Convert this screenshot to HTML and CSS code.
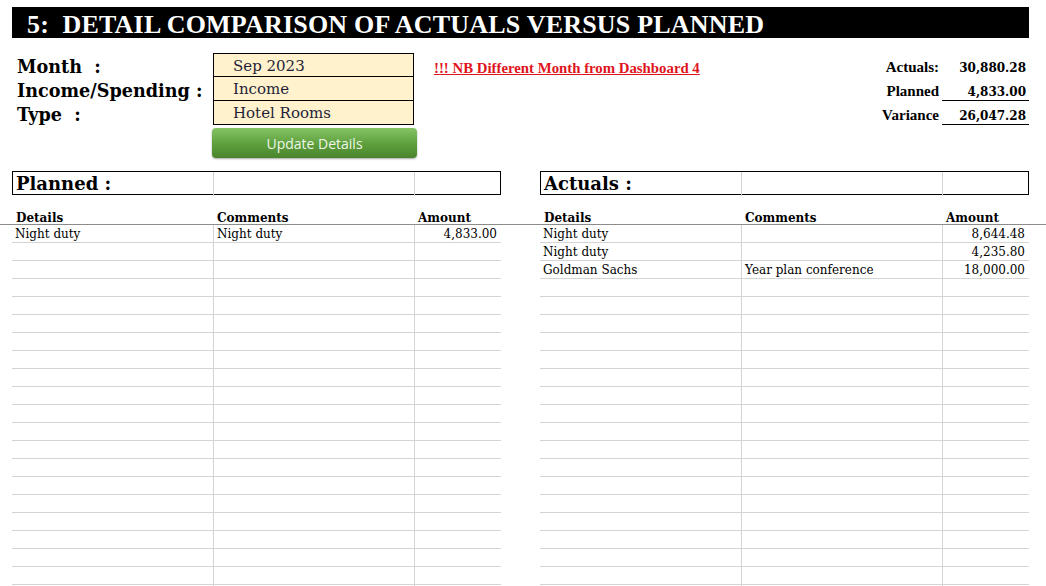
FILE: index.html
```html
<!DOCTYPE html>
<html lang="en">
<head>
    <meta charset="UTF-8">
    <meta name="viewport" content="width=device-width, initial-scale=1.0">
    <title>Detail Comparison of Actuals versus Planned</title>
    <link rel="stylesheet" href="styles.css">
</head>
<body>
    <div class="title-bar">5:&nbsp; DETAIL COMPARISON OF ACTUALS VERSUS PLANNED</div>

    <div class="top">
        <div class="label r1">Month&nbsp; :</div>
        <div class="label r2">Income/Spending :</div>
        <div class="label r3">Type&nbsp; :</div>

        <div class="field r1">Sep 2023</div>
        <div class="field r2">Income</div>
        <div class="field r3">Hotel Rooms</div>
        <button class="update-button">Update Details</button>

        <div class="note r1">!!! NB Different Month from Dashboard 4</div>

        <div class="sum-label r1">Actuals:</div>
        <div class="sum-value r1">30,880.28</div>
        <div class="sum-label r2">Planned</div>
        <div class="sum-value r2 underline">4,833.00</div>
        <div class="sum-label r3">Variance</div>
        <div class="sum-value r3 underline">26,047.28</div>
    </div>

    <div class="panel-heads">
        <div class="panel-head"><div>Planned :</div><div></div><div></div></div>
        <div class="panel-head"><div>Actuals :</div><div></div><div></div></div>
    </div>

    <div class="col-heads">
        <div class="col-head"><div>Details</div><div>Comments</div><div>Amount</div></div>
        <div class="col-head"><div>Details</div><div>Comments</div><div>Amount</div></div>
    </div>

    <div class="tables">
        <div class="table" id="planned">
            <div class="row"><div>Night duty</div><div>Night duty</div><div class="num">4,833.00</div></div>
        </div>
        <div class="table" id="actuals">
            <div class="row"><div>Night duty</div><div></div><div class="num">8,644.48</div></div>
            <div class="row"><div>Night duty</div><div></div><div class="num">4,235.80</div></div>
            <div class="row"><div>Goldman Sachs</div><div>Year plan conference</div><div class="num">18,000.00</div></div>
        </div>
    </div>

    <script>
        // pad both tables with empty rows down to the bottom of the sheet
        document.querySelectorAll('.table').forEach(function (table) {
            while (table.children.length < 21) {
                let row = document.createElement('div');
                row.className = 'row';
                row.innerHTML = '<div></div><div></div><div class="num"></div>';
                table.appendChild(row);
            }
        });
    </script>
</body>
</html>
```

FILE: styles.css
```css
body {
    margin: 0;
    font-family: "DejaVu Serif", Georgia, serif;
    color: #000000;
    background-color: #ffffff;
    overflow: hidden;
}
.title-bar {
    margin: 7px 17px 0 12px;
    height: 31px;
    line-height: 35px;
    padding-left: 15px;
    background-color: #000000;
    color: #ffffff;
    font-family: "Liberation Serif", serif;
    font-weight: bold;
    font-size: 26px;
    letter-spacing: 0.2px;
    white-space: nowrap;
}
.top {
    display: grid;
    grid-template-columns: 201px 201px 1fr auto 87px;
    grid-template-rows: 24px 24px 24px 33px;
    margin: 15px 17px 0 12px;
}
.r1 { grid-row: 1; }
.r2 { grid-row: 2; }
.r3 { grid-row: 3; }
.label {
    grid-column: 1;
    padding-left: 5px;
    font-weight: bold;
    font-size: 17.6px;
    line-height: 24px;
    white-space: nowrap;
    padding-top: 2px;
}
.field {
    grid-column: 2;
    border: 1px solid #000000;
    border-top: none;
    background-color: #fff2cc; /* pale yellow input cells */
    padding-left: 19px;
    font-size: 15px;
    line-height: 25px;
    color: #1f1f3a;
}
.field.r1 {
    border-top: 1px solid #000000;
    line-height: 24px;
}
.update-button {
    grid-column: 2;
    grid-row: 4;
    margin: 3px -3px 0 -1px;
    height: 30px;
    border: none;
    border-radius: 4px;
    background: linear-gradient(#86c465, #5d9e3c 55%, #4a852d);
    box-shadow: 0 1px 2px rgba(0,0,0,0.35);
    color: #eef6e8;
    font-family: "Open Sans", sans-serif;
    font-size: 14px;
}
.note {
    grid-column: 3;
    padding-left: 20px;
    padding-top: 7px;
    font-family: "Liberation Serif", serif;
    font-size: 14.8px;
    font-weight: bold;
    color: #e0141c;
    text-decoration: underline;
    white-space: nowrap;
}
.sum-label {
    grid-column: 4;
    padding-right: 3px;
    font-family: "Liberation Serif", serif;
    font-weight: bold;
    font-size: 15px;
    text-align: right;
    align-self: end;
    padding-bottom: 1px;
}
.sum-value {
    grid-column: 5;
    padding-right: 3px;
    font-weight: bold;
    font-size: 12px;
    text-align: right;
    align-self: end;
    padding-bottom: 1px;
    border-bottom: 1px solid transparent;
}
.sum-value.underline {
    border-bottom-color: #000000;
}
.panel-heads {
    display: flex;
    gap: 39px;
    margin: 13px 0 0 12px;
}
.panel-head {
    display: grid;
    grid-template-columns: 200px 201px 86px;
    width: 487px;
    height: 22px;
    border: 1px solid #000000;
}
.panel-head div + div {
    border-left: 1px solid #d4d4d4;
}
.panel-head div:first-child {
    padding-left: 3px;
    font-weight: bold;
    font-size: 18px;
    line-height: 24px;
}
.col-heads {
    display: flex;
    gap: 39px;
    padding-left: 12px;
    height: 29px;
    border-bottom: 1px solid #8c8c8c;
}
.col-head {
    display: grid;
    grid-template-columns: 201px 201px 87px;
    width: 489px;
    align-items: end;
    font-weight: bold;
    font-size: 12px;
}
.col-head div {
    padding-left: 4px;
    line-height: 12px;
}
.tables {
    display: flex;
    gap: 39px;
    padding-left: 12px;
}
.table {
    width: 489px;
}
.row {
    display: grid;
    grid-template-columns: 201px 201px 87px;
    height: 17px;
    border-bottom: 1px solid #d4d4d4;
    font-size: 12px;
    line-height: 19px;
}
.row div {
    padding-left: 3px;
    white-space: nowrap;
}
.row div + div {
    border-left: 1px solid #d4d4d4;
}
.row .num {
    padding-right: 4px;
    text-align: right;
}
```
